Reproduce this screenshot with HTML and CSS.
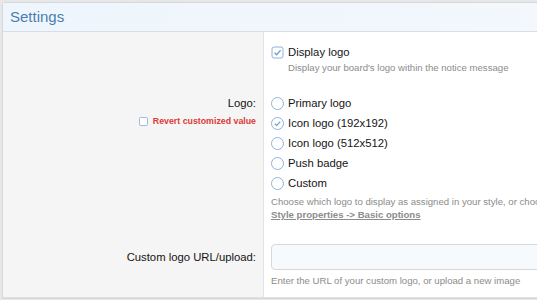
FILE: index.html
```html
<!DOCTYPE html>
<html lang="en">
<head>
    <meta charset="UTF-8">
    <title>Settings</title>
    <link rel="stylesheet" href="styles.css">
</head>
<body>
    <div class="block">
        <h2 class="blockHeader">Settings</h2>
        <div class="formRow first">
            <div class="rowLabel"></div>
            <div class="rowInput">
                <div class="choice">
                    <svg class="box" viewBox="0 0 13 13"><rect x="1" y="1" width="11" height="11" rx="2" fill="#fff" stroke="#8db3da"/><path d="M3.5 6.7 L5.6 8.7 L9.6 4.2" fill="none" stroke="#6f9fd2" stroke-width="1.3"/></svg>
                    <span>Display logo</span>
                </div>
                <div class="hint indent">Display your board's logo within the notice message</div>
            </div>
        </div>
        <div class="formRow">
            <div class="rowLabel">
                <div class="labelText">Logo:</div>
                <div class="revert">
                    <svg class="small" viewBox="0 0 10 10"><rect x="0.5" y="0.5" width="9" height="9" rx="1.5" fill="#fff" stroke="#8db3da"/></svg>
                    <span>Revert customized value</span>
                </div>
            </div>
            <div class="rowInput">
                <div class="choice radio">
                    <svg class="box" viewBox="0 0 13 13"><circle cx="6.5" cy="6.5" r="6" fill="#fff" stroke="#8db3da"/></svg>
                    <span>Primary logo</span>
                </div>
                <div class="choice radio">
                    <svg class="box" viewBox="0 0 13 13"><circle cx="6.5" cy="6.5" r="6" fill="#fff" stroke="#8db3da"/><path d="M3.8 6.7 L5.7 8.5 L9.3 4.6" fill="none" stroke="#6f9fd2" stroke-width="1.2"/></svg>
                    <span>Icon logo (192x192)</span>
                </div>
                <div class="choice radio">
                    <svg class="box" viewBox="0 0 13 13"><circle cx="6.5" cy="6.5" r="6" fill="#fff" stroke="#8db3da"/></svg>
                    <span>Icon logo (512x512)</span>
                </div>
                <div class="choice radio">
                    <svg class="box" viewBox="0 0 13 13"><circle cx="6.5" cy="6.5" r="6" fill="#fff" stroke="#8db3da"/></svg>
                    <span>Push badge</span>
                </div>
                <div class="choice radio">
                    <svg class="box" viewBox="0 0 13 13"><circle cx="6.5" cy="6.5" r="6" fill="#fff" stroke="#8db3da"/></svg>
                    <span>Custom</span>
                </div>
                <div class="hint explain">Choose which logo to display as assigned in your style, or choose a custom logo.</div>
                <a class="hint link">Style properties -&gt; Basic options</a>
            </div>
        </div>
        <div class="formRow last">
            <div class="rowLabel middle">
                <div class="labelText">Custom logo URL/upload:</div>
            </div>
            <div class="rowInput">
                <input type="text" class="textInput">
                <div class="hint">Enter the URL of your custom logo, or upload a new image</div>
            </div>
        </div>
    </div>
</body>
</html>
```

FILE: styles.css
```css
html, body {
    margin: 0;
    background: #e6e7e9;
    font-family: "Liberation Sans", Arial, sans-serif;
    color: #141414;
}
.block {
    margin: 2px 0 0 2px;
    width: 600px;
    background: #fff;
    border: 1px solid #d8d8d8;
    border-radius: 3px 0 0 0;
}
.blockHeader {
    margin: 0;
    height: 28px;
    line-height: 28px;
    padding: 0 7px;
    font-size: 15px;
    font-weight: normal;
    color: #4c7db0;
    background: linear-gradient(to right, #eef5fc, #f4f8fd);
    border-bottom: 1px solid #d7dee6;
}
.formRow {
    display: grid;
    grid-template-columns: 261px 1fr;
}
.formRow.last {
    border-bottom: 1px solid #e0e0e0;
}
.rowLabel {
    background: #f5f5f5;
    border-right: 1px solid #e2e2e2;
    padding: 10px 7px 10px 0;
    text-align: right;
    font-size: 11.3px;
}
.rowLabel.middle {
    padding-top: 15px;
}
.labelText {
    line-height: 20px;
}
.revert {
    display: flex;
    justify-content: flex-end;
    align-items: center;
    gap: 5px;
    margin-top: 2px;
    line-height: 12px;
    font-size: 8.8px;
    font-weight: bold;
    color: #dc3b35;
}
.small {
    width: 9px;
    height: 9px;
}
.rowInput {
    padding: 10px 0 10px 7px;
    font-size: 11.3px;
}
.first .rowInput {
    padding: 11px 0 9px 7px;
}
.choice {
    display: flex;
    align-items: center;
    gap: 4px;
    height: 18px;
}
.choice.radio {
    height: 20px;
}
.box {
    width: 13px;
    height: 13px;
    flex-shrink: 0;
}
.hint {
    font-size: 9.6px;
    color: #8c8c8c;
    line-height: 13px;
}
.indent {
    padding-left: 17px;
}
.explain {
    margin-top: 2px;
    white-space: nowrap;
}
.link {
    display: block;
    font-weight: bold;
    text-decoration: underline;
    line-height: 14px;
}
.last .rowInput {
    padding-bottom: 9px;
}
.textInput {
    display: block;
    box-sizing: border-box;
    width: 400px;
    height: 26px;
    margin: 2px 0 4px;
    border: 1px solid #d8d8d8;
    border-radius: 4px;
    background: #f7fafd;
}
.last .hint {
    line-height: 14px;
}
```
